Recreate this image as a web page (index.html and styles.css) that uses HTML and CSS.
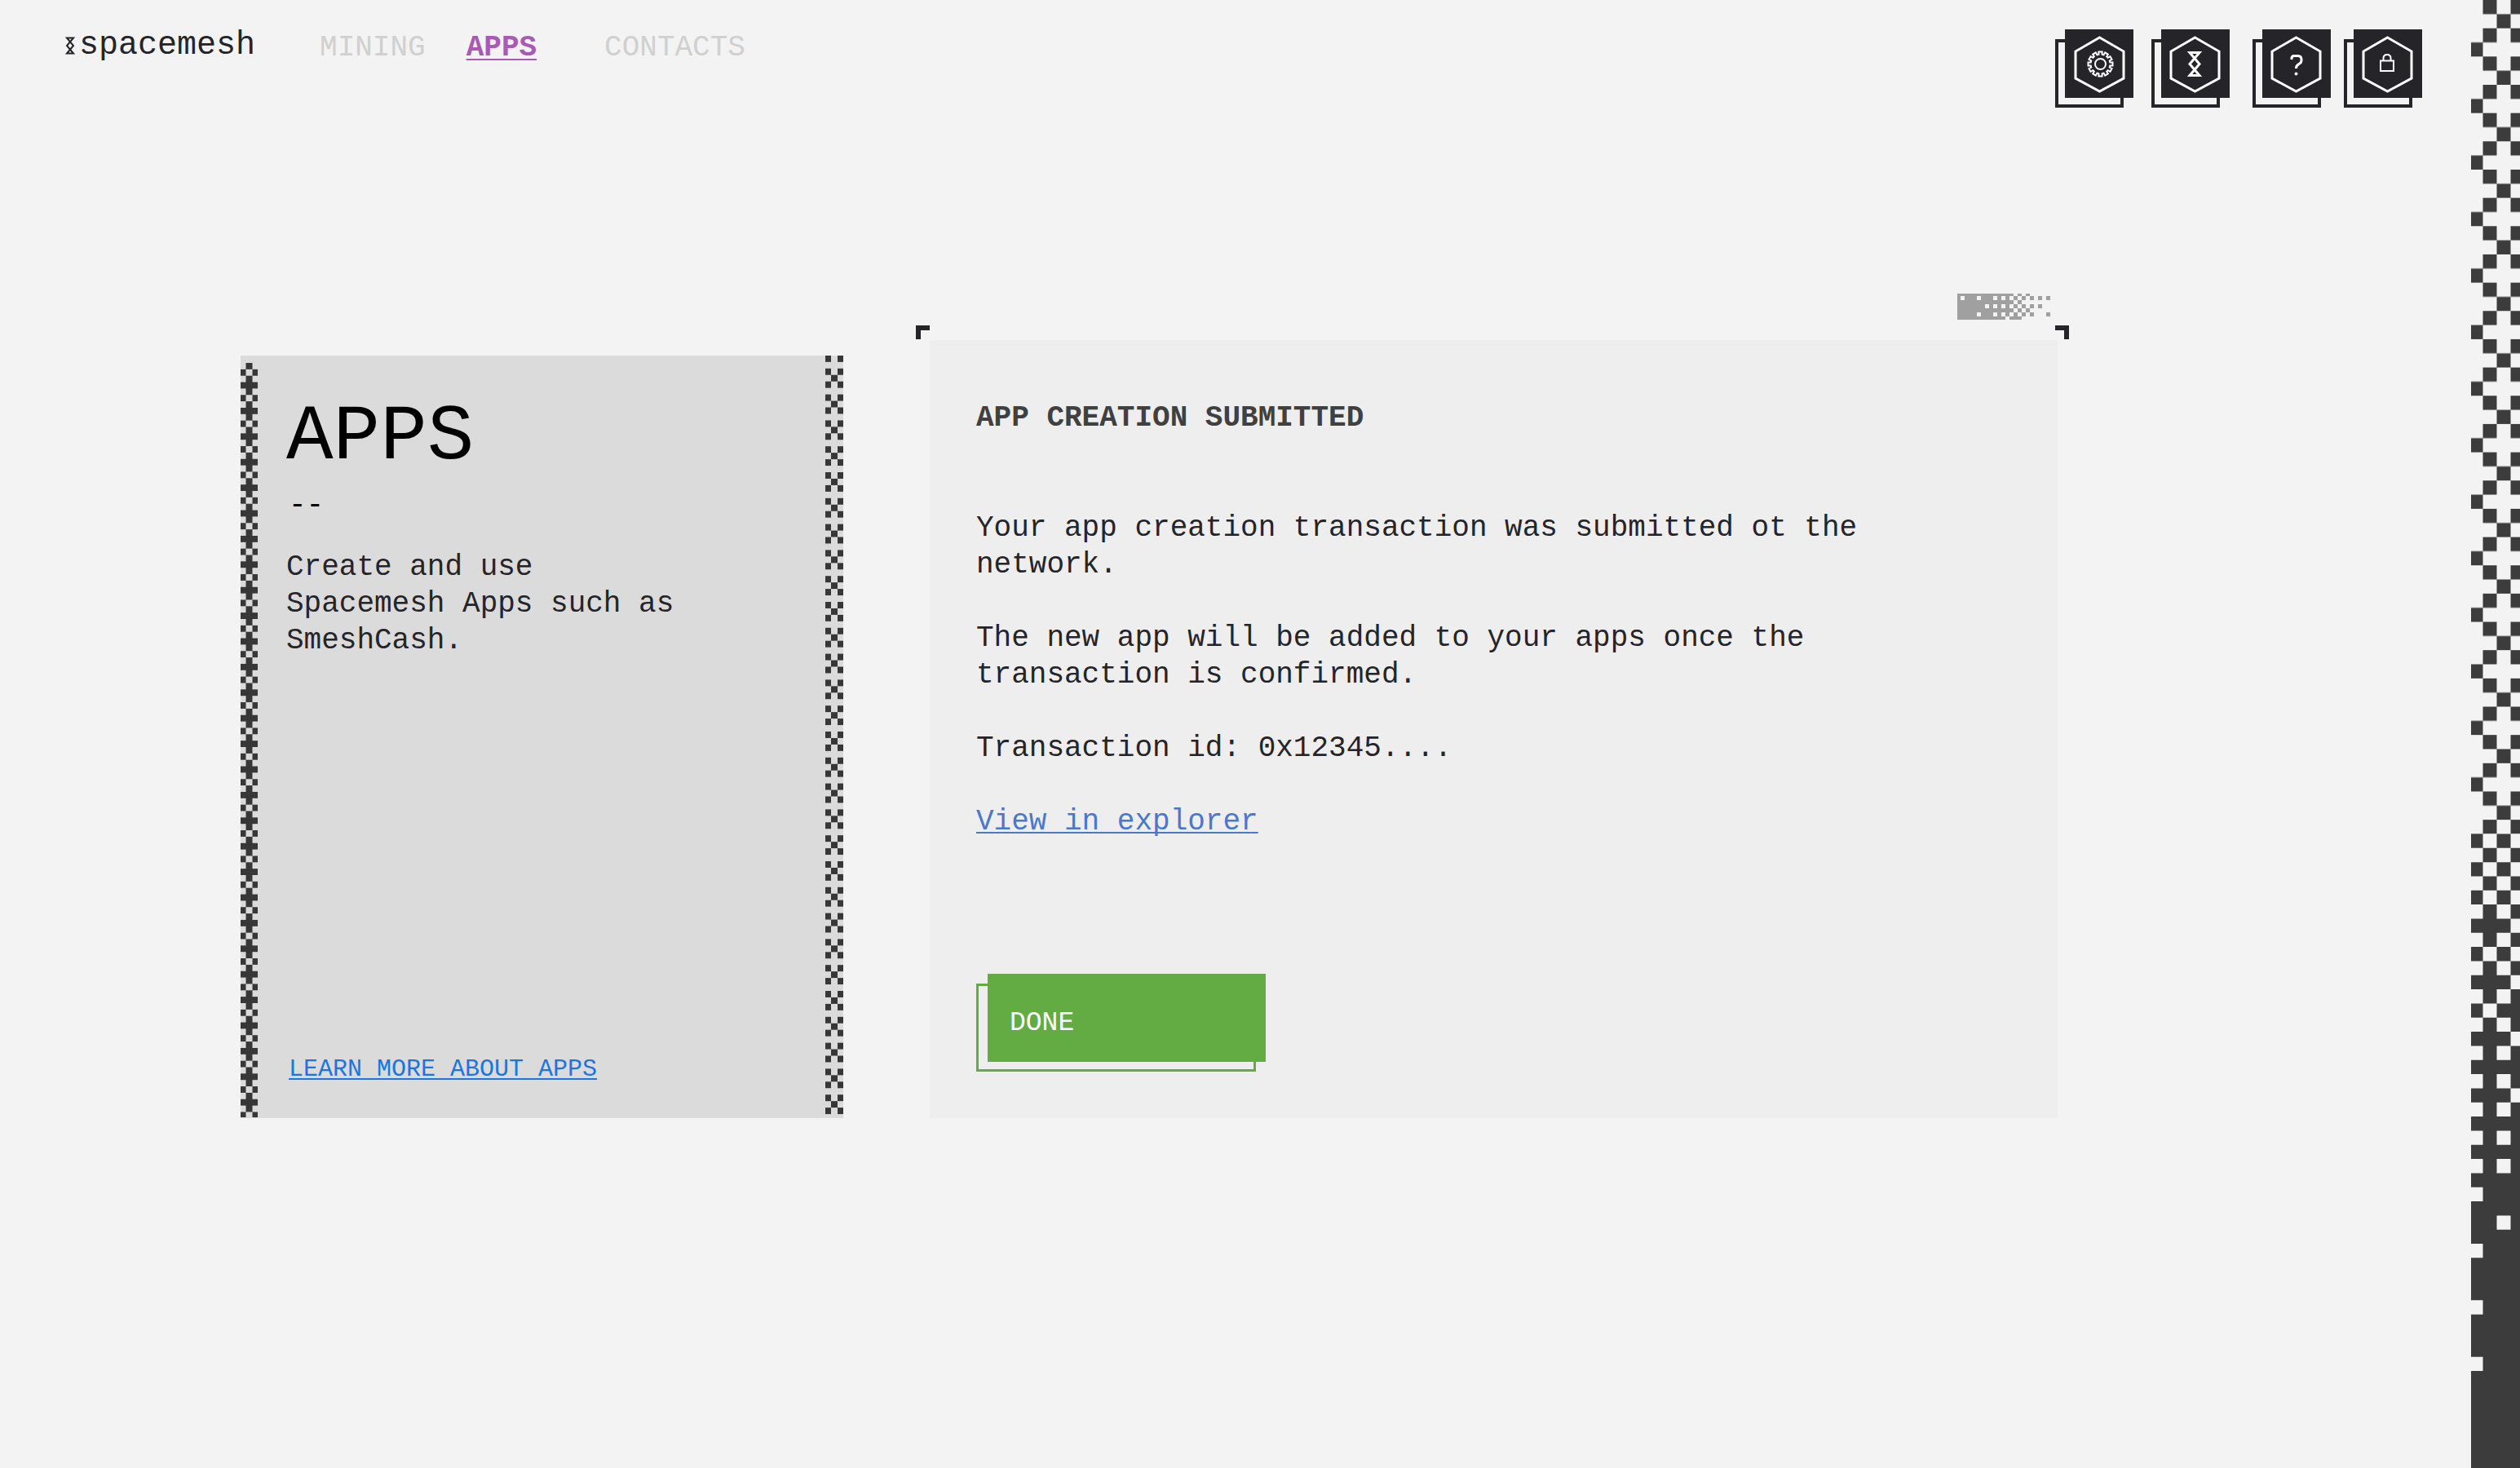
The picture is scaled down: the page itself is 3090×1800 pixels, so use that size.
FILE: index.html
```html
<!DOCTYPE html>
<html lang="en">
<head>
<meta charset="utf-8">
<title>Spacemesh – Apps</title>
<link rel="stylesheet" href="styles.css">
</head>
<body>
<div class="page">
  <header class="header">
    <a class="logo" href="#" aria-label="spacemesh home">
      <svg class="logo-mark" viewBox="-6 -11 12 22" aria-hidden="true"><path d="M-4-9.5H4L-4 0L4 9.5H-4L4 0Z"/></svg>
      <span>spacemesh</span>
    </a>
    <nav class="nav">
      <a href="#">MINING</a>
      <a href="#" class="active" aria-current="page">APPS</a>
      <a href="#">CONTACTS</a>
    </nav>
    <div class="tools">
      <div class="tool-pair">
        <button class="tool" type="button" aria-label="Settings">
          <svg viewBox="0 0 84 84"><path class="hex" d="M42.500 10L72 27V60L42.500 76L13 60V27Z"/>
            <g transform="translate(43.500 42.500)"><path class="thin" d="M-2.100-15H2.100V-11.800L4.080-11.270L5.680-14.040L9.320-11.940L7.720-9.170L9.170-7.720L11.940-9.320L14.040-5.680L11.270-4.080L11.800-2.100H15V2.100H11.800L11.270 4.080L14.040 5.680L11.940 9.320L9.170 7.720L7.720 9.170L9.320 11.940L5.680 14.040L4.080 11.270L2.100 11.800V15H-2.100V11.800L-4.080 11.270L-5.680 14.040L-9.320 11.940L-7.720 9.170L-9.170 7.720L-11.940 9.320L-14.040 5.680L-11.270 4.080L-11.800 2.100H-15V-2.100H-11.800L-11.270-4.080L-14.040-5.680L-11.940-9.320L-9.170-7.720L-7.720-9.170L-9.320-11.940L-5.680-14.040L-4.080-11.270L-2.100-11.800Z"/><circle class="thin" r="6.500"/></g></svg>
        </button>
        <button class="tool" type="button" aria-label="Network">
          <svg viewBox="0 0 84 84"><path class="hex" d="M41.500 10L71 27V60L41.500 76L12 60V27Z"/>
            <path class="mid" transform="translate(41 42.500)" d="M-6-14H6L-6 0L6 14H-6L6 0Z"/></svg>
        </button>
      </div>
      <div class="tool-pair tight">
        <button class="tool" type="button" aria-label="Help">
          <svg viewBox="0 0 84 84"><path class="hex" d="M41.500 10L71 27V60L41.500 76L12 60V27Z"/>
            <path class="mid" d="M36 37V35.500Q36 32.500 39 32.500H43.500Q48 32.500 48 37V38Q48 41 45 42.500Q41.500 44 41.500 48"/><circle class="dot" cx="41.500" cy="54.500" r="2"/></svg>
        </button>
        <button class="tool" type="button" aria-label="Lock">
          <svg viewBox="0 0 84 84"><path class="hex" d="M41.500 10L71 27V60L41.500 76L12 60V27Z"/>
            <path class="thin" d="M33 38.500H49V51H33ZM36.500 38V35.500Q36.500 31 41 31Q45.500 31 45.500 35.500V38"/></svg>
        </button>
      </div>
    </div>
  </header>

  <main class="main">
    <aside class="intro">
      <svg class="edge" aria-hidden="true">
        <defs><pattern id="plus" width="21" height="31.400" patternUnits="userSpaceOnUse" patternTransform="translate(0 9)">
          <path d="M6.500 0H14.500V7.850H6.500ZM0 7.850H6.500V15.700H0ZM14.500 7.850H21V15.700H14.500ZM6.500 15.700H14.500V31.400H6.500ZM0 23.550H21V31.400H0Z"/></pattern></defs>
        <rect y="9" width="21" height="925" fill="url(#plus)"/>
      </svg>
      <div class="intro-body">
        <h1>APPS</h1>
        <p class="dash">--</p>
        <p>Create and use<br>Spacemesh Apps such as SmeshCash.</p>
        <a class="learn" href="#">LEARN MORE ABOUT APPS</a>
      </div>
      <svg class="edge" aria-hidden="true">
        <defs><pattern id="cross" width="22" height="31.800" patternUnits="userSpaceOnUse" patternTransform="translate(0 -16)">
          <path d="M0 0H7V7.950H0ZM15 0H22V7.950H15ZM7 7.950H15V15.900H7ZM0 15.900H7V23.850H0ZM15 15.900H22V23.850H15Z"/></pattern></defs>
        <rect width="22" height="100%" fill="url(#cross)"/>
      </svg>
    </aside>

    <section class="card">
      <svg class="dither" viewBox="0 0 115 32" aria-hidden="true">
        <path fill-rule="evenodd" d="M0 0H69V3H59V8H64V13H59V18H69V23H59V28H59V32H0ZM4 3V8H9V3ZM24 3V8H29V3ZM44 3V8H49V3ZM54 3V8H59V3ZM34 13V18H39V13ZM44 13V18H49V13ZM54 13V18H59V13ZM24 23V28H29V23ZM44 23V28H49V23ZM54 23V28H59V23Z"/>
        <path d="M74 0h5v3h-5zM84 0h5v3h-5zM59 3h5v5h-5zM69 3h5v5h-5zM79 3h5v5h-5zM89 3h5v5h-5zM99 3h5v5h-5zM109 3h5v5h-5zM64 8h5v5h-5zM74 8h5v5h-5zM59 13h5v5h-5zM69 13h5v5h-5zM79 13h5v5h-5zM89 13h5v5h-5zM99 13h5v5h-5zM74 18h5v5h-5zM84 18h5v5h-5zM59 23h5v5h-5zM69 23h5v5h-5zM79 23h5v5h-5zM89 23h5v5h-5zM109 23h5v5h-5zM64 28h15v4h-15z"/>
      </svg>
      <h2>APP CREATION SUBMITTED</h2>
      <div class="message">
        <p>Your app creation transaction was submitted ot the network.</p>
        <p>The new app will be added to your apps once the transaction is confirmed.</p>
        <p>Transaction id: 0x12345....</p>
        <p><a href="#">View in explorer</a></p>
      </div>
      <button class="done" type="button"><span>DONE</span></button>
    </section>
  </main>
</div>

<div class="strip" aria-hidden="true">
  <svg width="60" height="1802" viewBox="0 0 60 1802">
    <defs>
      <pattern id="checks" width="4" height="4" patternUnits="userSpaceOnUse">
        <path class="ink" d="M1 0h1v1h-1zM3 0h1v1h-1zM2 1h1v1h-1zM1 2h1v1h-1zM3 2h1v1h-1zM0 3h1v1h-1z"/>
      </pattern>
    </defs>
    <g transform="translate(-2.500 0) scale(17 17.330)">
      <rect width="4" height="59" fill="url(#checks)"/>
      <path class="ink" d="M0 59h1v1h-1zM2 59h1v1h-1zM1 60h1v1h-1zM3 60h1v1h-1zM0 61h1v1h-1zM2 61h1v1h-1zM1 62h1v1h-1zM3 62h1v1h-1zM0 63h1v1h-1zM2 63h1v1h-1zM1 64h1v3h-1zM3 64h1v1h-1zM0 65h3v1h-3zM3 66h1v1h-1zM0 67h1v1h-1zM2 67h1v1h-1zM1 68h1v1h-1zM3 68h1v1h-1zM0 69h4v35h-4z"/>
      <path class="gap" d="M3 69h1v1h-1zM0 70h1v1h-1zM2 70h1v1h-1zM1 71h1v1h-1zM0 72h1v1h-1zM2 72h1v1h-1zM3 73h1v1h-1zM0 74h1v1h-1zM2 74h1v1h-1zM0 76h1v1h-1zM2 76h1v1h-1zM3 77h1v1h-1zM0 78h1v1h-1zM2 78h1v1h-1zM0 80h1v1h-1zM2 80h1v1h-1zM0 82h1v1h-1zM2 82h1v1h-1zM0 84h1v1h-1zM2 86h1v1h-1zM0 88h1v1h-1zM0 92h1v1h-1zM0 96h1v1h-1z"/>
    </g>
  </svg>
</div>
</body>
</html>
```
FILE: styles.css
```css
:root {
  --ink: #252429;
  --charcoal: #3c3c3c;
  --paper: #f3f3f3;
  --green: #63ac43;
}

*,
*::before,
*::after { box-sizing: border-box; }

body {
  margin: 0;
  min-height: 100vh;
  display: flex;
  background: var(--paper);
  color: var(--ink);
  font: 36px/45px "Liberation Mono", monospace;
}

h1, h2, p { margin: 0; }

button {
  padding: 0;
  border: 0;
  background: none;
  font: inherit;
  cursor: pointer;
}

.page { flex: 1; min-width: 0; }

/* Header */
.header {
  display: flex;
  align-items: flex-start;
  padding: 33px 60px 0 80px;
}

.logo {
  display: flex;
  align-items: center;
  gap: 5px;
  color: var(--ink);
  font-size: 40px;
  text-decoration: none;
}

.logo-mark {
  width: 12px;
  height: 22px;
  fill: none;
  stroke: var(--ink);
  stroke-width: 2;
}

.nav {
  display: flex;
  gap: 50px;
  margin: 3px 0 0 79px;
}

.nav a { color: #d0d0d0; text-decoration: none; }

.nav .active {
  margin-right: 33px;
  color: #aa59b5;
  font-weight: 700;
  text-decoration: underline;
  text-decoration-thickness: 2px;
  text-underline-offset: 4px;
}

.tools {
  display: flex;
  gap: 28px;
  margin: 3px 0 0 auto;
}

.tool-pair { display: flex; gap: 22px; }
.tool-pair.tight { gap: 16px; }

.tool {
  position: relative;
  display: flex;
  justify-content: flex-end;
  align-items: flex-start;
  width: 96px;
  height: 96px;
}

.tool::before {
  content: "";
  position: absolute;
  left: 0;
  bottom: 0;
  width: 84px;
  height: 84px;
  border: 4px solid var(--ink);
}

.tool svg {
  position: relative;
  width: 84px;
  height: 84px;
  background: var(--ink);
  fill: none;
  stroke: #fff;
}

.hex { stroke-width: 3; }
.mid { stroke-width: 3; }
.thin { stroke-width: 2; }
.dot { fill: #fff; stroke: none; }

/* Content */
.main {
  display: grid;
  grid-template-columns: 739fr 1383fr;
  gap: 106px;
  padding: 285px 507px 60px 295px;
}

.intro {
  display: flex;
  margin-top: 19px;
  background: #dbdbdb;
}

.edge {
  flex: none;
  width: 22px;
  height: auto;
  fill: #373737;
}

.intro-body {
  flex: 1;
  display: flex;
  flex-direction: column;
  align-items: flex-start;
  padding: 41px 100px 37px 34px;
}

h1 {
  color: #000;
  font-size: 96px;
  font-weight: 400;
  line-height: 120px;
}

.dash,
.learn { margin-left: 3px; }

.dash { margin-bottom: 31px; color: #000; }

.learn {
  margin-top: auto;
  color: #1b76e0;
  font-size: 30px;
  text-decoration-thickness: 2px;
  text-underline-offset: 3px;
}

.card {
  position: relative;
  display: flex;
  flex-direction: column;
  align-items: flex-start;
  padding: 73px 57px 57px;
  background: #eee;
}

.card::before,
.card::after {
  content: "";
  position: absolute;
  top: -18px;
  width: 17px;
  height: 17px;
  border: 0 solid var(--ink);
  border-top-width: 6px;
}

.card::before { left: -17px; border-left-width: 6px; }
.card::after { right: -14px; border-right-width: 6px; }

.dither {
  position: absolute;
  top: -57px;
  right: 8px;
  width: 115px;
  height: 32px;
  fill: #a0a0a0;
}

h2 {
  margin-bottom: 90px;
  color: #404040;
  font-size: 36px;
}

.message {
  display: grid;
  gap: 45px;
  max-width: 1200px;
  margin-bottom: 164px;
}

.message a {
  color: #4a78cc;
  text-decoration-thickness: 2px;
  text-underline-offset: 3px;
  text-decoration-skip-ink: none;
}

.done {
  position: relative;
  width: 355px;
  height: 120px;
  margin-top: auto;
  padding: 0 0 12px 14px;
}

.done::before {
  content: "";
  position: absolute;
  left: 0;
  bottom: 0;
  width: 343px;
  height: 108px;
  border: 3px solid var(--green);
}

.done span {
  position: relative;
  display: flex;
  align-items: center;
  height: 108px;
  padding: 12px 0 0 27px;
  background: var(--green);
  color: #fff;
  font-size: 33px;
}

/* Pixel strip on the window's right edge */
.strip {
  flex: none;
  width: 60px;
  height: 100vh;
  overflow: hidden;
}

.strip .ink { fill: var(--charcoal); }
.strip .gap { fill: var(--paper); }
```
